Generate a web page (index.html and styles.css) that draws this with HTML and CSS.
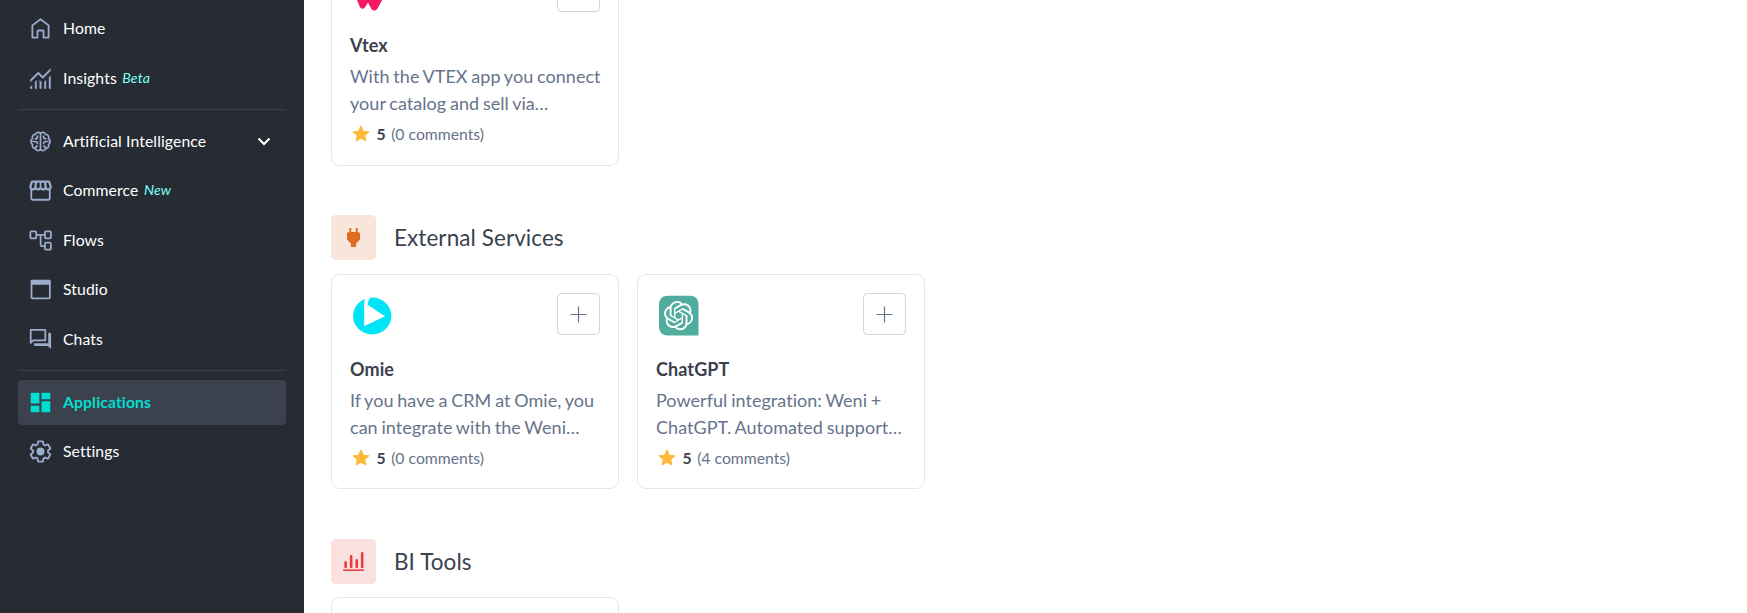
FILE: index.html
```html
<!DOCTYPE html>
<html lang="en">
<head>
<meta charset="utf-8">
<title>Applications</title>
<link rel="stylesheet" href="styles.css">
</head>
<body>
<div class="app">
  <nav class="sidebar">
    <a class="item"><svg class="icon line" viewBox="0 0 24 24"><path d="M4.800 9.200 12 3.800l7.200 5.400v10.900h-4.500v-5.600q0-.7-.7-.7h-4q-.7 0-.7.7v5.600H4.800z"/></svg><span>Home</span></a>
    <a class="item"><svg class="icon insights" viewBox="0 -960 960 960"><path d="M120-120v-60l60-60v120h-60Zm165 0v-240l60-60v300h-60Zm165 0v-300l60 61v239h-60Zm165 0v-239l60-60v299h-60Zm165 0v-400l60-60v460h-60ZM120-356v-85l280-278 160 160 280-280v85L560-474 400-634 120-356Z"/></svg><span>Insights</span><em class="tag">Beta</em></a>
    <hr class="divider">
    <a class="item"><svg class="icon brain" viewBox="0 0 24 24"><path d="M12 4.500v15M12 5.200C11.200 3.400 8.200 3.400 7.600 5.600 5.300 5.500 4.200 7.600 5 9.300c-2.100 1-2.100 4.400 0 5.400-.8 1.700.3 3.800 2.600 3.700.6 2.200 3.600 2.200 4.400.4M12 5.200c.8-1.800 3.800-1.800 4.400.4 2.300-.1 3.400 2 2.600 3.700 2.100 1 2.100 4.400 0 5.400.8 1.700-.3 3.800-2.600 3.700-.6 2.200-3.600 2.200-4.400.4M9.300 7.300c.1 1.400-.6 2.200-1.900 2.300M5.200 12h2.200c1.200 0 1.900.6 1.900 1.800M7.600 18.200c-.2-1.200.2-1.900 1.400-2.100M14.700 7.300c-.1 1.400.6 2.200 1.900 2.300M18.800 12h-2.200c-1.200 0-1.900.6-1.900 1.800M16.400 18.200c.2-1.200-.2-1.900-1.400-2.100"/></svg><span class="wide">Artificial Intelligence</span><svg class="chevron" viewBox="0 0 14 9"><path d="m1.500 1.500 5.500 5.500 5.500-5.500"/></svg></a>
    <a class="item"><svg class="icon" viewBox="0 -960 960 960"><path d="M841-518v318q0 33-23.500 56.500T761-120H201q-33 0-56.500-23.500T121-200v-318q-23-21-35.500-54t-.5-72l42-136q8-26 28.500-43t47.500-17h556q27 0 47 16.500t29 43.500l42 136q12 39-.5 71T841-518Zm-272-42q27 0 41-18.500t11-41.500l-22-140h-88v148q0 21 14 36.500t44 15.500Zm-180 0q33 0 47.500-15.500T451-612v-148h-88l-22 140q-4 24 10.500 42t37.500 18Zm-178 0q18 0 31.500-13t16.500-33l22-154h-78l-40 134q-6 20 6.500 39t41.500 27Zm540 0q29 0 42-19t6-39l-42-142h-76l22 154q3 20 16.500 33t31.500 13ZM186-185h590v-302q-5 7-25 7-27 0-47.500-9T663-518q-18 18-41 28t-49 10q-27 0-50.500-10T481-518q-17 18-39.500 28T393-480q-29 0-52.500-10T299-518q-21 21-41.500 29.500T211-480q-20 0-25-7v302Z"/></svg><span>Commerce</span><em class="tag">New</em></a>
    <a class="item"><svg class="icon line" viewBox="0 0 24 24"><rect x="3" y="3.9" width="5.2" height="6.2" rx=".7"/><rect x="16" y="3.9" width="5.2" height="6.2" rx=".7"/><rect x="16" y="13.9" width="5.2" height="6.2" rx=".7"/><path d="M8.200 7H16M12.100 7v9q0 1 1 1H16"/></svg><span>Flows</span></a>
    <a class="item"><svg class="icon line" viewBox="0 0 24 24"><rect x="4" y="4.100" width="16.300" height="15.700" rx=".6"/><path class="solid" d="M3.500 3.500h17.300v4.300H3.500z"/></svg><span>Studio</span></a>
    <a class="item"><svg class="icon line" viewBox="0 0 24 24"><path d="M3.300 3.400h13v9.400H5.500l-2.200 2.200z"/><path class="solid" d="M18.900 6h1.600q.9 0 .9.900v13.600l-2.900-2.700H7.300q-1 0-1-1v-1.400h12.600z"/></svg><span>Chats</span></a>
    <hr class="divider">
    <a class="item active"><svg class="icon" viewBox="0 0 24 24"><path d="M4.100 3.300h6.900v9.500H3.300V4.100q0-.8.800-.8zM12.900 3.300H20q.7 0 .7.800v4.900h-7.800zM3.300 14.800H11v5.900H4.100q-.8 0-.8-.8zM12.900 10.800h7.800v9.100q0 .8-.8.800h-7z"/></svg><span>Applications</span></a>
    <a class="item"><svg class="icon gear" viewBox="0 0 24 24"><path d="M19.430 12.980c.04-.32.07-.64.07-.98 0-.34-.03-.66-.07-.98l2.110-1.650c.19-.15.24-.42.12-.64l-2-3.460c-.09-.16-.26-.25-.44-.25-.06 0-.12.010-.17.030l-2.490 1c-.52-.4-1.080-.73-1.690-.98l-.38-2.650C14.460 2.180 14.250 2 14 2h-4c-.25 0-.46.18-.49.420l-.38 2.650c-.61.25-1.170.59-1.690.98l-2.490-1c-.06-.02-.12-.03-.18-.03-.17 0-.34.09-.43.25l-2 3.460c-.13.22-.07.49.12.64l2.110 1.650c-.04.32-.07.65-.07.98 0 .33.03.66.07.98l-2.110 1.650c-.19.15-.24.42-.12.64l2 3.460c.09.16.26.25.44.25.06 0 .12-.01.17-.03l2.490-1c.52.4 1.080.73 1.690.98l.38 2.650c.03.24.24.42.49.42h4c.25 0 .46-.18.49-.42l.38-2.650c.61-.25 1.170-.59 1.690-.98l2.490 1c.06.02.12.03.18.03.17 0 .34-.09.43-.25l2-3.460c.12-.22.07-.49-.12-.64l-2.110-1.650z"/><circle class="solid" cx="12" cy="12" r="3.500"/></svg><span>Settings</span></a>
  </nav>

  <main class="content">
    <section class="section">
      <div class="cards">
        <article class="card">
          <header class="card-head">
            <svg class="logo" viewBox="0 0 45 45"><path fill="#f71963" d="M5 8h35q3 0 2 4L27.200 39q-2.900 3.200-5.800 0L18 32.600 15 37.200q-2.500 3-5 0L2 18z"/></svg>
            <button class="add"><svg viewBox="0 0 18 18"><path d="M9 .5v17M.5 9h17"/></svg></button>
          </header>
          <h3 class="name">Vtex</h3>
          <p class="desc">With the VTEX app you connect your catalog and sell via…</p>
          <div class="rating"><svg class="star" viewBox="0 0 24 24"><path d="M12 2.800 14.700 8.700l6.500.7-4.900 4.300 1.400 6.400-5.700-3.300-5.700 3.300 1.400-6.400L2.800 9.400l6.500-.7z"/></svg><b>5</b><span>(0 comments)</span></div>
        </article>
      </div>
    </section>

    <section class="section">
      <header class="section-head">
        <div class="badge orange"><svg viewBox="0 0 24 24"><path d="M8.300 3.500h1.700V7h4V3.500h1.700V7q2.100.2 2.100 1.800v5l-3.500 3.600v3H9.700v-3l-3.500-3.600v-5Q6.200 7.200 8.300 7z"/></svg></div>
        <h2>External Services</h2>
      </header>
      <div class="cards">
        <article class="card">
          <header class="card-head">
            <svg class="logo" viewBox="0 0 45 45"><ellipse cx="22.200" cy="23" rx="19.200" ry="18.400" fill="#00e5f6"/><path fill="#fff" d="M16 3 14.200 9v24.200L35 23.200 17.600 11.700C17.500 9 19 6.500 21 4.500z"/></svg>
            <button class="add"><svg viewBox="0 0 18 18"><path d="M9 .5v17M.5 9h17"/></svg></button>
          </header>
          <h3 class="name">Omie</h3>
          <p class="desc">If you have a CRM at Omie, you can integrate with the Weni…</p>
          <div class="rating"><svg class="star" viewBox="0 0 24 24"><path d="M12 2.800 14.700 8.700l6.500.7-4.900 4.300 1.400 6.400-5.700-3.300-5.700 3.300 1.400-6.400L2.800 9.400l6.500-.7z"/></svg><b>5</b><span>(0 comments)</span></div>
        </article>
        <article class="card">
          <header class="card-head">
            <svg class="logo" viewBox="0 0 45 45"><path fill="#50ad9d" d="M12 2.800h21.500q9 0 9 9v30.700H12q-9 0-9-9V11.800q0-9 9-9z"/><path fill="#fff" transform="translate(7.900 8) scale(1.220)" d="M22.282 9.821a5.985 5.985 0 0 0-.516-4.910 6.046 6.046 0 0 0-6.510-2.900A6.065 6.065 0 0 0 4.981 4.182a5.985 5.985 0 0 0-3.998 2.900 6.046 6.046 0 0 0 .743 7.097 5.980 5.980 0 0 0 .510 4.911 6.051 6.051 0 0 0 6.515 2.900A5.985 5.985 0 0 0 13.260 24a6.056 6.056 0 0 0 5.772-4.206 5.990 5.990 0 0 0 3.998-2.900 6.056 6.056 0 0 0-.747-7.073zM13.260 22.430a4.476 4.476 0 0 1-2.876-1.040l.141-.081 4.779-2.758a.795.795 0 0 0 .392-.681v-6.737l2.020 1.168a.071.071 0 0 1 .038.052v5.583a4.504 4.504 0 0 1-4.494 4.494zM3.600 18.304a4.470 4.470 0 0 1-.535-3.014l.142.085 4.783 2.759a.771.771 0 0 0 .780 0l5.843-3.369v2.332a.080.080 0 0 1-.033.062L9.740 19.950a4.500 4.500 0 0 1-6.140-1.646zM2.340 7.896a4.485 4.485 0 0 1 2.366-1.973V11.600a.766.766 0 0 0 .388.676l5.815 3.355-2.020 1.168a.076.076 0 0 1-.071 0l-4.830-2.786A4.504 4.504 0 0 1 2.340 7.872zm16.597 3.855l-5.833-3.387L15.119 7.200a.076.076 0 0 1 .071 0l4.830 2.791a4.494 4.494 0 0 1-.676 8.105v-5.678a.790.790 0 0 0-.407-.667zm2.010-3.023l-.141-.085-4.774-2.782a.776.776 0 0 0-.785 0L9.409 9.230V6.897a.066.066 0 0 1 .028-.061l4.830-2.787a4.500 4.500 0 0 1 6.680 4.660zm-12.640 4.135l-2.020-1.164a.080.080 0 0 1-.038-.057V6.075a4.500 4.500 0 0 1 7.375-3.453l-.142.080L8.704 5.460a.795.795 0 0 0-.393.681zm1.097-2.365l2.602-1.500 2.607 1.500v2.999l-2.597 1.500-2.607-1.500z"/></svg>
            <button class="add"><svg viewBox="0 0 18 18"><path d="M9 .5v17M.5 9h17"/></svg></button>
          </header>
          <h3 class="name">ChatGPT</h3>
          <p class="desc">Powerful integration: Weni + ChatGPT. Automated support…</p>
          <div class="rating"><svg class="star" viewBox="0 0 24 24"><path d="M12 2.800 14.700 8.700l6.500.7-4.900 4.300 1.400 6.400-5.700-3.300-5.700 3.300 1.400-6.400L2.800 9.400l6.500-.7z"/></svg><b>5</b><span>(4 comments)</span></div>
        </article>
      </div>
    </section>

    <section class="section">
      <header class="section-head">
        <div class="badge red"><svg viewBox="0 0 24 24"><path class="bars" d="M5 12.800v4M9.900 7.400v9.400M14.900 11v5.800M19.700 4.700v12.100"/><path d="M2.700 19h18.700v1.400H2.700z"/></svg></div>
        <h2>BI Tools</h2>
      </header>
      <div class="cards"><article class="card"></article></div>
    </section>
  </main>
</div>
</body>
</html>
```
FILE: styles.css
```css
* { box-sizing: border-box; }

body {
  margin: 0;
  background: #fff;
  font-family: Lato, sans-serif;
  overflow: hidden;
}

h2, h3, p { margin: 0; }

.app {
  display: flex;
  height: 613px;
  overflow: hidden;
}

/* Sidebar */
.sidebar {
  flex: none;
  display: flex;
  flex-direction: column;
  gap: 4.5px;
  width: 304px;
  padding: 6px 18px 0;
  background: #272b33;
}

.item {
  flex: none;
  display: flex;
  align-items: center;
  height: 45px;
  padding: 0 15.5px 0 9px;
  border-radius: 4.5px;
  color: #fff;
  font-size: 15.75px;
  line-height: 24.75px;
  letter-spacing: .1px;
}

.item.active {
  background: #3b414d;
  color: #00ded2;
  font-weight: 700;
}

.icon {
  flex: none;
  width: 27px;
  height: 27px;
  margin-right: 9px;
  fill: #9caccc;
}

.active .icon { fill: #00ded2; }

.line, .brain, .gear {
  fill: none;
  stroke: #9caccc;
  stroke-width: 1.6;
  stroke-linejoin: round;
}

.insights { stroke: #9caccc; stroke-width: 10; }
.brain { stroke-width: 1.5; stroke-linecap: round; }
.gear path { stroke-width: 1.8; transform: translate(1.2px, 1.2px) scale(.9); }
.icon .solid { fill: #9caccc; stroke: none; }
.wide { letter-spacing: .1px; }

.tag {
  margin-left: 5.5px;
  color: #7bfff3;
  font-size: 14.2px;
}

.chevron {
  width: 14px;
  height: 9px;
  margin-left: auto;
  fill: none;
  stroke: #fff;
  stroke-width: 2;
}

.divider {
  flex: none;
  width: 100%;
  height: 1px;
  margin: 4px 0 4px;
  border: 0;
  background: #3b414d;
}

/* Content, scrolled part way down the catalogue */
.content {
  display: flex;
  flex: 1;
  flex-direction: column;
  gap: 49.75px;
  margin-top: -49.55px;
  padding-left: 27px;
}

.section {
  display: flex;
  flex-direction: column;
  gap: 13.5px;
}

.section-head {
  display: flex;
  align-items: center;
  gap: 18px;
  color: #3b414d;
}

.section-head h2 {
  font-size: 22.5px;
  font-weight: 400;
  line-height: 31.5px;
  letter-spacing: .07px;
}

.badge {
  display: grid;
  place-items: center;
  width: 45px;
  height: 45px;
  border-radius: 4.5px;
}

.badge svg { width: 27px; height: 27px; }
.orange { background: #f9e6db; fill: #dd6b20; }
.red { background: #fbe0e0; fill: #e53e3e; }
.bars { stroke: #e53e3e; stroke-width: 2.3; stroke-linecap: round; }

.cards {
  display: flex;
  gap: 18px;
}

.card {
  width: 288px;
  height: 215.25px;
  padding: 18.15px 18px 18px;
  border: 1px solid #e2e6ed;
  border-radius: 9px;
}

.card-head {
  display: flex;
  align-items: flex-start;
  justify-content: space-between;
  height: 45px;
  margin-bottom: 17.45px;
}

.logo { width: 45px; height: 45px; }

.add {
  display: grid;
  place-items: center;
  width: 43px;
  height: 42px;
  padding: 1px 0 0;
  border: 1px solid #d0d3d9;
  border-radius: 4.5px;
  background: #fff;
}

.add svg {
  width: 17px;
  height: 17px;
  fill: none;
  stroke: #67738b;
  stroke-width: 1.3;
}

.name {
  color: #3b414d;
  font-size: 18px;
  font-weight: 700;
  line-height: 27px;
  letter-spacing: .1px;
}

.desc {
  margin: 4.2px -4px 4.8px 0;
  color: #67738b;
  font-size: 18px;
  line-height: 27px;
  letter-spacing: .04px;
  word-spacing: -.9px;
}

.rating {
  display: flex;
  align-items: center;
  gap: 4.5px;
  color: #67738b;
  font-size: 15.75px;
  line-height: 24.75px;
}

.rating b { margin-right: 1px; color: #3b414d; }

.star {
  width: 20px;
  height: 20px;
  margin: 0 1px;
  fill: #ffb938;
  stroke: #ffb938;
  stroke-width: 1.5;
  stroke-linejoin: round;
}
```
